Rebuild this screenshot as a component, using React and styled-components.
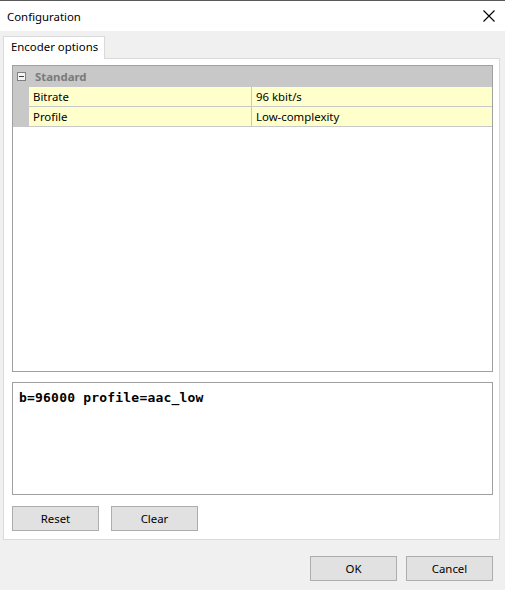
import React from "react";
import styled, { createGlobalStyle } from "styled-components";

const GlobalStyle = createGlobalStyle`
  html, body {
    margin: 0;
    padding: 0;
    background: #f0f0f0;
  }
  body {
    font-family: "Noto Sans", "Open Sans", sans-serif;
    font-size: 11.4px;
    color: #000;
  }
`;

const Window = styled.div`
  width: 505px;
  height: 590px;
  box-sizing: border-box;
  border-top: 1px solid #5a5a5a;
  background: #f0f0f0;
  display: flex;
  flex-direction: column;
`;

const TitleBar = styled.div`
  height: 30px;
  background: #ffffff;
  display: flex;
  align-items: center;
  justify-content: space-between;
  padding: 0 8px 0 7px;
`;

const CloseButton = styled.div`
  width: 16px;
  height: 16px;
  display: flex;
  align-items: center;
  justify-content: center;
`;

const Body = styled.div`
  padding: 5px 5px 0 3px;
  display: flex;
  flex-direction: column;
`;

const TabStrip = styled.div`
  display: flex;
  height: 22px;
`;

const Tab = styled.div`
  box-sizing: border-box;
  width: 102px;
  height: 23px;
  background: #ffffff;
  border: 1px solid #d9d9d9;
  border-bottom: none;
  padding: 2px 0 0 7px;
  position: relative;
  z-index: 1;
`;

const TabPanel = styled.div`
  box-sizing: border-box;
  height: 482px;
  background: #ffffff;
  border: 1px solid #d9d9d9;
  padding: 6px 6px 8px 8px;
  display: flex;
  flex-direction: column;
`;

const Grid = styled.div`
  box-sizing: border-box;
  height: 308px;
  border: 1px solid #a0a0a0;
  background: #ffffff;
`;

const CategoryRow = styled.div`
  height: 20px;
  background: #c8c8c8;
  display: flex;
  align-items: center;
  color: #7a7a7a;
  font-weight: bold;
  border-bottom: 1px solid #c8c8c8;
`;

const Toggle = styled.div`
  box-sizing: border-box;
  width: 9px;
  height: 9px;
  border: 1px solid #808080;
  background: #f4f4f4;
  margin: 0 9px 0 4px;
  position: relative;
  &::after {
    content: "";
    position: absolute;
    left: 1px;
    top: 3px;
    width: 5px;
    height: 1px;
    background: #404040;
  }
`;

const PropRow = styled.div`
  display: flex;
  height: 20px;
  border-bottom: 1px solid #c8c8c8;
  box-sizing: border-box;
`;

const Margin = styled.div`
  width: 16px;
  background: #c8c8c8;
`;

const Cell = styled.div`
  box-sizing: border-box;
  width: ${(p) => p.$width};
  flex: ${(p) => (p.$grow ? 1 : "none")};
  background: #ffffcc;
  padding-left: 4px;
  display: flex;
  align-items: center;
  border-right: ${(p) => (p.$divider ? "1px solid #c8c8c8" : "none")};
`;

const Output = styled.div`
  box-sizing: border-box;
  margin-top: 10px;
  height: 113px;
  border: 1px solid #a0a0a0;
  padding: 7px 6px;
  font-family: "DejaVu Sans Mono", "Liberation Mono", monospace;
  font-weight: bold;
  font-size: 13px;
  letter-spacing: 0.2px;
`;

const ButtonRow = styled.div`
  display: flex;
  gap: 12px;
  margin-top: 11px;
`;

const Button = styled.div`
  box-sizing: border-box;
  width: 87px;
  height: 25px;
  background: #e1e1e1;
  border: 1px solid #adadad;
  display: flex;
  align-items: center;
  justify-content: center;
`;

const Footer = styled.div`
  display: flex;
  justify-content: flex-end;
  gap: 9px;
  padding: 16px 12px 0 0;
`;

export default function App() {
  return (
    <>
      <GlobalStyle />
      <Window>
        <TitleBar>
          <span>Configuration</span>
          <CloseButton>
            <svg width="12" height="12" viewBox="0 0 12 12">
              <path d="M0.5 0.5 L11.5 11.5 M11.5 0.5 L0.5 11.5" stroke="#000" strokeWidth="1.1" />
            </svg>
          </CloseButton>
        </TitleBar>
        <Body>
          <TabStrip>
            <Tab>Encoder options</Tab>
          </TabStrip>
          <TabPanel>
            <Grid>
              <CategoryRow>
                <Toggle />
                Standard
              </CategoryRow>
              <PropRow>
                <Margin />
                <Cell $width="223px" $divider>Bitrate</Cell>
                <Cell $grow>96 kbit/s</Cell>
              </PropRow>
              <PropRow>
                <Margin />
                <Cell $width="223px" $divider>Profile</Cell>
                <Cell $grow>Low-complexity</Cell>
              </PropRow>
            </Grid>
            <Output>b=96000 profile=aac_low</Output>
            <ButtonRow>
              <Button>Reset</Button>
              <Button>Clear</Button>
            </ButtonRow>
          </TabPanel>
        </Body>
        <Footer>
          <Button>OK</Button>
          <Button>Cancel</Button>
        </Footer>
      </Window>
    </>
  );
}
